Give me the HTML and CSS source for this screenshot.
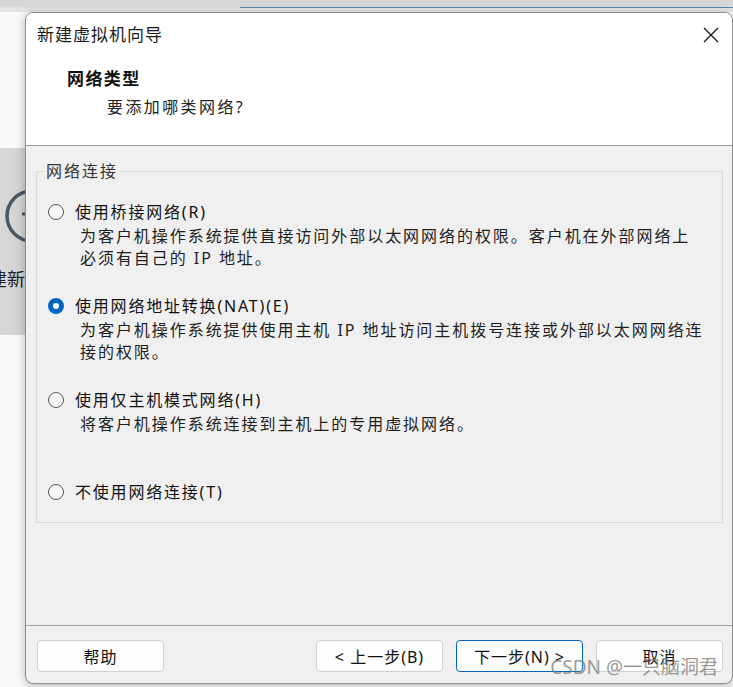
FILE: index.html
```html
<!DOCTYPE html>
<html lang="zh-CN">
<head>
<meta charset="utf-8">
<title>新建虚拟机向导</title>
<link rel="stylesheet" href="styles.css">
</head>
<body>
<div class="desk-top"></div>
<div class="bgapp">
  <div class="bgapp-panel">
    <svg class="bgapp-icon" width="60" height="60" viewBox="0 0 60 60">
      <circle cx="30" cy="30" r="25" fill="none" stroke="#4b5763" stroke-width="3.5"/>
      <line x1="20" y1="28" x2="40" y2="28" stroke="#4b5763" stroke-width="3"/>
    </svg>
    <div class="bgapp-text">创建新虚拟机</div>
  </div>
</div>

<div class="dialog">
  <div class="titlebar">
    <span class="title">新建虚拟机向导</span>
    <svg class="close" width="16" height="16" viewBox="0 0 16 16">
      <path d="M1 1 L15 15 M15 1 L1 15" stroke="#1a1a1a" stroke-width="1.4" fill="none"/>
    </svg>
  </div>
  <div class="header">
    <div class="heading">网络类型</div>
    <div class="subheading">要添加哪类网络?</div>
  </div>
  <div class="body">
    <fieldset class="group">
      <legend class="legend">网络连接</legend>
      <div class="option">
        <div class="opt-line"><span class="radio"></span><span class="opt-label">使用桥接网络(R)</span></div>
        <div class="desc">为客户机操作系统提供直接访问外部以太网网络的权限。客户机在外部网络上<br>必须有自己的 IP 地址。</div>
      </div>
      <div class="option">
        <div class="opt-line"><span class="radio checked"></span><span class="opt-label">使用网络地址转换(NAT)(E)</span></div>
        <div class="desc">为客户机操作系统提供使用主机 IP 地址访问主机拨号连接或外部以太网网络连<br>接的权限。</div>
      </div>
      <div class="option">
        <div class="opt-line"><span class="radio"></span><span class="opt-label">使用仅主机模式网络(H)</span></div>
        <div class="desc">将客户机操作系统连接到主机上的专用虚拟网络。</div>
      </div>
      <div class="option last">
        <div class="opt-line"><span class="radio"></span><span class="opt-label">不使用网络连接(T)</span></div>
      </div>
    </fieldset>
  </div>
  <div class="footer">
    <button class="btn">帮助</button>
    <div class="btn-group">
      <button class="btn">&lt; 上一步(B)</button>
      <button class="btn primary">下一步(N) &gt;</button>
      <button class="btn">取消</button>
    </div>
  </div>
</div>
<div class="watermark">CSDN @一只脑洞君</div>
</body>
</html>
```

FILE: styles.css
```css
html, body {
  margin: 0;
  padding: 0;
}
body {
  width: 733px;
  height: 687px;
  overflow: hidden;
  position: relative;
  background: #f7f7f7;
  font-family: "Noto Sans", "Noto Sans CJK SC", sans-serif;
  color: #1b1b1b;
}
.desk-top {
  height: 12px;
  background: linear-gradient(to bottom, #d6d7d9 0, #d6d7d9 7px, #e4e4e4 8px, #e4e4e4 12px);
  position: relative;
}
.desk-top::after {
  content: "";
  position: absolute;
  left: 240px;
  right: 0;
  top: 7px;
  height: 1px;
  background: #5a8bb3;
}
.bgapp {
  position: absolute;
  left: 0;
  top: 12px;
  width: 40px;
  height: 675px;
  background: #f9f9f9;
}
.bgapp-panel {
  margin-top: 136px;
  height: 187px;
  background: linear-gradient(to right, #d9d9d9, #cdcdcd);
  position: relative;
}
.bgapp-icon {
  position: absolute;
  left: 2px;
  top: 38px;
}
.bgapp-text {
  position: absolute;
  left: -29px;
  top: 119px;
  font-size: 18px;
  line-height: 24px;
  white-space: nowrap;
  color: #222;
}
.dialog {
  position: absolute;
  left: 25px;
  top: 12px;
  width: 708px;
  height: 672px;
  box-sizing: border-box;
  border: 1px solid #8c8c8c;
  border-radius: 8px;
  background: #f0f0f0;
  box-shadow: 0 2px 10px rgba(0,0,0,0.25);
  display: flex;
  flex-direction: column;
  overflow: hidden;
}
.titlebar {
  height: 46px;
  flex: none;
  box-sizing: border-box;
  background: #ffffff;
  display: flex;
  align-items: center;
  justify-content: space-between;
  padding: 0 13px 3px 11px;
}
.title {
  font-size: 17px;
  line-height: 22px;
  letter-spacing: 1px;
  color: #1a1a1a;
}
.close {
  display: block;
  margin-top: 1px;
}
.header {
  height: 87px;
  flex: none;
  background: #ffffff;
  border-bottom: 1px solid #a0a0a0;
  padding-top: 9px;
  box-sizing: border-box;
}
.heading {
  padding-left: 41px;
  font-size: 17px;
  font-weight: bold;
  letter-spacing: 1.4px;
  line-height: 22px;
  color: #111;
}
.subheading {
  padding-left: 81px;
  margin-top: 6px;
  font-size: 16px;
  letter-spacing: 2.4px;
  line-height: 22px;
  color: #222;
}
.body {
  flex: 1;
  padding: 14px 9px 0 10px;
}
.group {
  margin: 0;
  border: 1px solid #d9d9d9;
  border-radius: 0;
  padding: 19px 10px 19px 11px;
  min-width: 0;
}
.legend {
  padding: 0 2px;
  margin-left: -4px;
  font-size: 16px;
  letter-spacing: 2px;
  line-height: 22px;
  color: #333;
}
.option {
  margin-bottom: 26px;
}
.option.last {
  margin-top: 46px;
  margin-bottom: 0;
}
.opt-line {
  display: flex;
  align-items: center;
  height: 22px;
}
.radio {
  display: block;
  width: 16px;
  height: 16px;
  min-width: 16px;
  flex: 0 0 16px;
  box-sizing: border-box;
  border: 1px solid #5a5a5a;
  border-radius: 50%;
  background: #f6f6f6;
  margin-right: 11px;
  margin-top: -1px;
  position: relative;
}
.radio.checked {
  border: none;
  background: #0067c0;
}
.radio.checked::after {
  content: "";
  position: absolute;
  left: 5px;
  top: 5px;
  width: 6px;
  height: 6px;
  border-radius: 50%;
  background: #ffffff;
}
.opt-label {
  font-size: 16px;
  letter-spacing: 1.8px;
  line-height: 22px;
  color: #111;
}
.desc {
  margin-top: 2px;
  padding-left: 32px;
  font-size: 16px;
  letter-spacing: 1.95px;
  line-height: 22px;
  color: #1e1e1e;
  white-space: nowrap;
}
.footer {
  height: 58px;
  flex: none;
  box-sizing: border-box;
  border-top: 1px solid #a0a0a0;
  padding: 14px 9px 11px 11px;
  display: flex;
  justify-content: space-between;
  align-items: flex-start;
}
.btn-group {
  display: flex;
  gap: 13px;
}
.btn {
  width: 127px;
  height: 32px;
  box-sizing: border-box;
  border: 1px solid #cfcfcf;
  border-radius: 4px;
  background: #fdfdfd;
  font-family: "Noto Sans", "Noto Sans CJK SC", sans-serif;
  font-size: 16px;
  letter-spacing: 1px;
  color: #111;
  padding: 0;
  margin: 0;
}
.btn.primary {
  border-color: #0067c0;
}
.watermark {
  position: absolute;
  right: 15px;
  top: 654px;
  font-size: 19px;
  line-height: 26px;
  color: rgba(120, 120, 120, 0.75);
  font-family: "Noto Sans", "Noto Sans CJK SC", sans-serif;
  white-space: nowrap;
}
```
